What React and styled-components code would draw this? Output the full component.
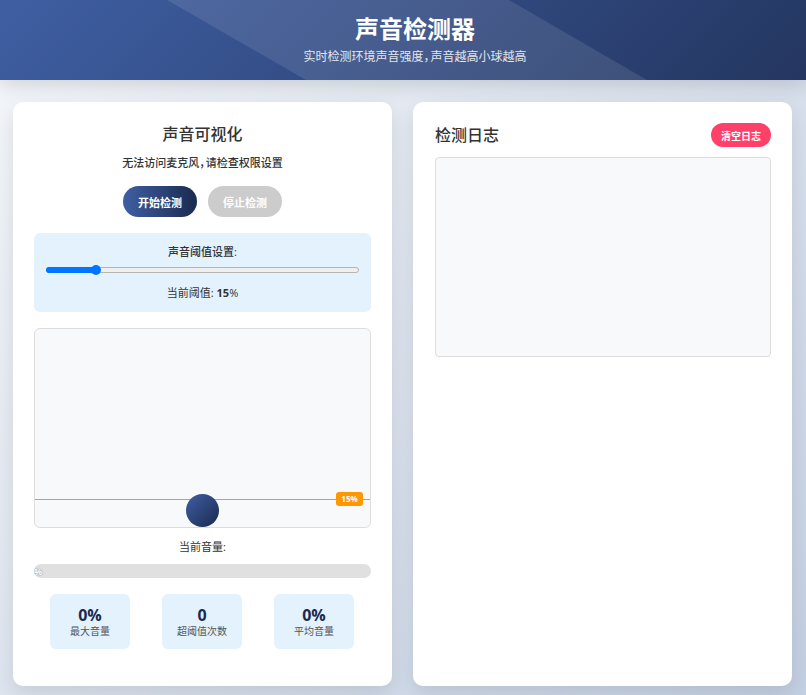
import React from 'react'
import styled, { createGlobalStyle } from 'styled-components'

const GlobalStyle = createGlobalStyle`
    * {
        box-sizing: border-box;
    }
    html, body {
        margin: 0;
        padding: 0;
    }
    body {
        min-height: 695px;
        font-family: 'Open Sans', 'Noto Sans CJK SC', sans-serif;
        color: #333;
        background: linear-gradient(135deg, #f5f7fa 0%, #c3cfe2 100%);
    }
`

const Page = styled.div`
    height: 695px;
    overflow: hidden;
    display: flex;
    flex-direction: column;
`

const Header = styled.header`
    position: relative;
    height: 80px;
    flex-shrink: 0;
    display: flex;
    flex-direction: column;
    align-items: center;
    padding-left: 24px;
    background: linear-gradient(135deg, #3f5fa3 0%, #243660 100%);
    box-shadow: 0 4px 20px rgba(0, 0, 0, 0.15);
    color: #fff;
    &::before {
        content: '';
        position: absolute;
        inset: 0;
        background: rgba(255, 255, 255, 0.1);
        clip-path: polygon(167px 0, 509px 0, 647px 100%, 306px 100%);
    }
`

const Title = styled.h1`
    position: relative;
    margin: 12px 0 0;
    font-size: 24px;
    line-height: 34px;
    font-weight: 700;
`

const Subtitle = styled.p`
    position: relative;
    margin: 2px 0 0;
    font-size: 12px;
    line-height: 18px;
    opacity: 0.85;
`

// the comma is narrower than a full CJK cell in the reference
const Comma = styled.span`
    letter-spacing: -0.42em;
`

const Main = styled.main`
    flex: 1;
    display: grid;
    grid-template-columns: 379px 379px;
    gap: 21px;
    padding: 22px 14px 9px 13px;
`

const Card = styled.section`
    background: #fff;
    border-radius: 10px;
    padding: 21px;
    padding-left: ${(p) => (p.$log ? '22px' : '21px')};
    box-shadow: 0 8px 20px rgba(0, 0, 0, 0.1);
    display: flex;
    flex-direction: column;
`

const CardTitle = styled.h2`
    margin: 0;
    font-size: 16px;
    line-height: 22px;
    font-weight: 500;
    color: #333;
    text-align: center;
`

const Status = styled.p`
    margin: 10px 0 0;
    font-size: 11px;
    line-height: 16px;
    font-weight: 500;
    text-align: center;
`

const Buttons = styled.div`
    display: flex;
    justify-content: center;
    gap: 11px;
    margin-top: 15px;
`

const Button = styled.button`
    width: 74px;
    height: 31px;
    border: 0;
    border-radius: 16px;
    padding: 0;
    font-family: inherit;
    font-size: 11px;
    font-weight: 700;
    color: #fff;
    background: ${(p) =>
        p.disabled ? '#ccc' : 'linear-gradient(90deg, #3f5fa3 0%, #1a2a4f 100%)'};
`

const Threshold = styled.div`
    margin-top: 16px;
    height: 79px;
    padding: 11px 12px;
    border-radius: 6px;
    background: #e3f2fd;
    text-align: center;
`

const ThresholdLabel = styled.div`
    font-size: 11px;
    line-height: 16px;
    font-weight: 500;
`

const Track = styled.div`
    position: relative;
    height: 6px;
    margin-top: 7px;
    border-radius: 3px;
    border: 1px solid #b5b5b5;
    background: #efefef;
`

const TrackFill = styled.div`
    position: absolute;
    left: -1px;
    top: -1px;
    bottom: -1px;
    width: 50px;
    border-radius: 3px;
    background: #0075ff;
`

const TrackThumb = styled.div`
    position: absolute;
    left: 44px;
    top: -3px;
    width: 10px;
    height: 10px;
    border-radius: 50%;
    background: #0075ff;
`

const ThresholdValue = styled.div`
    margin-top: 12px;
    font-size: 11px;
    line-height: 16px;
`

const Strong = styled.span`
    font-weight: 700;
`

const Visual = styled.div`
    position: relative;
    margin-top: 16px;
    height: 200px;
    border: 1px solid #ddd;
    border-radius: 6px;
    background: #f8f9fa;
    overflow: hidden;
`

const ThresholdLine = styled.div`
    position: absolute;
    left: 0;
    right: 0;
    bottom: 27px;
    height: 1px;
    background: #ff9800;
`

const LineBadge = styled.span`
    position: absolute;
    right: 7px;
    bottom: 21px;
    width: 27px;
    height: 14px;
    border-radius: 3px;
    background: #ff9800;
    color: #fff;
    font-size: 8px;
    line-height: 14px;
    font-weight: 700;
    text-align: center;
`

const Ball = styled.div`
    position: absolute;
    left: 151px;
    bottom: 0;
    width: 33px;
    height: 33px;
    border-radius: 50%;
    background: linear-gradient(135deg, #3f5fa3 0%, #1a2a4f 100%);
`

const VolumeLabel = styled.div`
    margin-top: 11px;
    font-size: 11px;
    line-height: 16px;
    text-align: center;
`

const Meter = styled.div`
    position: relative;
    margin-top: 9px;
    height: 14px;
    border-radius: 7px;
    background: #e0e0e0;
    overflow: hidden;
`

const MeterFill = styled.div`
    width: 8px;
    height: 100%;
    display: flex;
    justify-content: flex-end;
    align-items: center;
    color: #fff;
    font-size: 9px;
    font-weight: 700;
    white-space: nowrap;
    text-shadow: 0 0 2px rgba(0, 0, 0, 0.5);
`

const Stats = styled.div`
    display: flex;
    gap: 32px;
    margin-top: 16px;
    padding-left: 16px;
`

const Stat = styled.div`
    width: 80px;
    height: 55px;
    padding-top: 13px;
    border-radius: 6px;
    background: #e3f2fd;
    text-align: center;
`

const StatValue = styled.div`
    font-size: 16px;
    line-height: 17px;
    font-weight: 700;
    color: #1a2a4f;
`

const StatLabel = styled.div`
    font-size: 10px;
    line-height: 14px;
    color: #555;
`

const LogHeader = styled.div`
    display: flex;
    justify-content: space-between;
    align-items: center;
`

const LogTitle = styled(CardTitle)`
    text-align: left;
`

const ClearButton = styled.button`
    width: 60px;
    height: 24px;
    border: 0;
    border-radius: 12px;
    padding: 0;
    background: #ff4069;
    color: #fff;
    font-family: inherit;
    font-size: 10px;
    font-weight: 700;
`

const LogBox = styled.div`
    margin-top: 10px;
    height: 200px;
    border: 1px solid #ddd;
    border-radius: 4px;
    background: #f8f9fa;
`

function App() {
    return (
        <>
            <GlobalStyle />
            <Page>
                <Header>
                    <Title>声音检测器</Title>
                    <Subtitle>
                        实时检测环境声音强度<Comma>，</Comma>声音越高小球越高
                    </Subtitle>
                </Header>
                <Main>
                    <Card>
                        <CardTitle>声音可视化</CardTitle>
                        <Status>
                            无法访问麦克风<Comma>，</Comma>请检查权限设置
                        </Status>
                        <Buttons>
                            <Button>开始检测</Button>
                            <Button disabled>停止检测</Button>
                        </Buttons>
                        <Threshold>
                            <ThresholdLabel>声音阈值设置:</ThresholdLabel>
                            <Track>
                                <TrackFill />
                                <TrackThumb />
                            </Track>
                            <ThresholdValue>
                                当前阈值: <Strong>15</Strong>%
                            </ThresholdValue>
                        </Threshold>
                        <Visual>
                            <ThresholdLine />
                            <LineBadge>15%</LineBadge>
                            <Ball />
                        </Visual>
                        <VolumeLabel>当前音量:</VolumeLabel>
                        <Meter>
                            <MeterFill>0%</MeterFill>
                        </Meter>
                        <Stats>
                            <Stat>
                                <StatValue>0%</StatValue>
                                <StatLabel>最大音量</StatLabel>
                            </Stat>
                            <Stat>
                                <StatValue>0</StatValue>
                                <StatLabel>超阈值次数</StatLabel>
                            </Stat>
                            <Stat>
                                <StatValue>0%</StatValue>
                                <StatLabel>平均音量</StatLabel>
                            </Stat>
                        </Stats>
                    </Card>
                    <Card $log>
                        <LogHeader>
                            <LogTitle>检测日志</LogTitle>
                            <ClearButton>清空日志</ClearButton>
                        </LogHeader>
                        <LogBox />
                    </Card>
                </Main>
            </Page>
        </>
    )
}

export default App
